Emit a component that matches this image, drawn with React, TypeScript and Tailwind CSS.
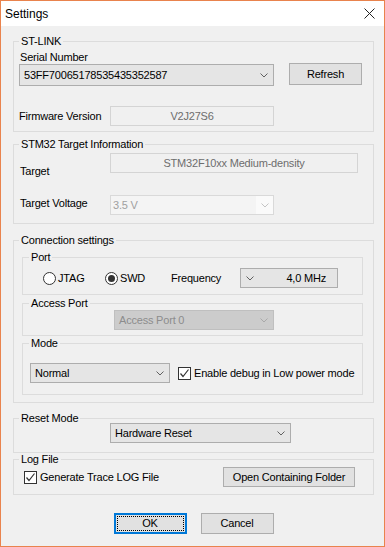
import React from "react";

const Chevron: React.FC<{ color?: string }> = ({ color = "#606060" }) => (
  <svg width="8" height="5" viewBox="0 0 8 5" fill="none">
    <polyline points="0.5,0.5 4,4 7.5,0.5" stroke={color} strokeWidth="1" />
  </svg>
);

const Group: React.FC<{
  title: string;
  inner?: boolean;
  className?: string;
  children: React.ReactNode;
}> = ({ title, inner, className = "", children }) => (
  <fieldset className={`border border-[#dcdcdc] ${className}`}>
    <legend className={`${inner ? "ml-[6px]" : "ml-[5px]"} px-[2px] leading-[13px]`}>
      {title}
    </legend>
    {children}
  </fieldset>
);

const Combo: React.FC<{ value: string; className?: string; disabled?: boolean }> = ({
  value,
  className = "",
  disabled,
}) => (
  <div
    className={`flex items-center justify-between border pl-[4px] pr-[5px] ${
      disabled
        ? "border-[#bfbfbf] bg-[#cccccc] text-[#8c8c8c]"
        : "border-[#adadad] bg-[#e5e5e5] text-black"
    } ${className}`}
  >
    <span>{value}</span>
    <Chevron color={disabled ? "#a9a9a9" : "#606060"} />
  </div>
);

const ReadOnly: React.FC<{ value: string; className?: string }> = ({ value, className = "" }) => (
  <div
    className={`flex h-[20px] items-center justify-center border border-[#d4d4d4] bg-[#f0f0f0] text-[#6d6d6d] ${className}`}
  >
    {value}
  </div>
);

const Button: React.FC<{ className?: string; children: React.ReactNode }> = ({
  className = "",
  children,
}) => (
  <button
    className={`flex items-center justify-center border border-[#adadad] bg-[#e1e1e1] ${className}`}
  >
    {children}
  </button>
);

const Radio: React.FC<{ checked?: boolean }> = ({ checked }) => (
  <span className="flex h-[13px] w-[13px] items-center justify-center rounded-full border border-[#333333] bg-white">
    {checked && <span className="h-[7px] w-[7px] rounded-full bg-[#333333]" />}
  </span>
);

const Checkbox: React.FC = () => (
  <span className="flex h-[13px] w-[13px] items-center justify-center border border-[#333333] bg-white">
    <svg width="11" height="11" viewBox="0 0 11 11" fill="none">
      <polyline points="1.5,5.5 4,8.5 9.5,1.5" stroke="#333333" strokeWidth="1.2" />
    </svg>
  </span>
);

export default function App() {
  return (
    <div className="flex h-[547px] w-[385px] flex-col border border-[#e9834d] bg-[#f0f0f0] font-['Liberation_Sans',Arial,sans-serif] text-[11px] tracking-[-0.2px] text-black">
      {/* title bar */}
      <div className="flex h-[25px] shrink-0 items-center justify-between bg-white pl-[4px] pr-[9px]">
        <span className="text-[12px] tracking-normal">Settings</span>
        <svg width="11" height="11" viewBox="0 0 11 11">
          <path d="M0.5 0.5 L10.5 10.5 M10.5 0.5 L0.5 10.5" stroke="#222" strokeWidth="1" />
        </svg>
      </div>

      <div className="flex flex-col pl-[12px] pt-[9px]">
        <Group title="ST-LINK" className="w-[361px]">
          <div className="px-[5px] pb-[5px] pt-[3px]">
            <div className="pl-[1px] leading-[13px]">Serial Number</div>
            <div className="flex items-start">
              <Combo value="53FF70065178535435352587" className="h-[22px] w-[255px]" />
              <Button className="ml-[15px] mt-[-1px] h-[22px] w-[73px]">Refresh</Button>
            </div>
            <div className="mt-[20px] flex items-center">
              <span className="w-[91px]">Firmware Version</span>
              <ReadOnly value="V2J27S6" className="w-[164px]" />
            </div>
          </div>
        </Group>

        <Group title="STM32 Target Information" className="mt-[6px] w-[361px]">
          <div className="px-[5px] pb-[8px] pt-[2px]">
            <div className="flex items-start">
              <span className="mt-[12px] w-[91px] pl-[1px] leading-[13px]">Target</span>
              <ReadOnly value="STM32F10xx Medium-density" className="w-[248px]" />
            </div>
            <div className="mt-[17px] flex items-start">
              <span className="mt-[2px] w-[91px] pl-[1px] leading-[13px]">Target Voltage</span>
              <div className="flex h-[20px] w-[164px] border border-[#d9d9d9] bg-[#f4f4f4] text-[#a0a0a0]">
                <span className="flex flex-1 items-center pl-[2px]">3.5 V</span>
                <span className="flex w-[17px] items-center justify-center bg-[#fafafa]">
                  <Chevron color="#c4c4c4" />
                </span>
              </div>
            </div>
          </div>
        </Group>

        <Group title="Connection settings" className="mt-[10px] w-[361px]">
          <div className="pb-[7px] pl-[8px] pt-[4px]">
            <Group title="Port" inner className="w-[341px]">
              <div className="flex h-[20px] items-center pb-0 pt-0 mt-[4px] mb-[6px]">
                <span className="ml-[20px] flex w-[62px] items-center gap-[2px]">
                  <Radio />
                  <span>JTAG</span>
                </span>
                <span className="flex w-[66px] items-center gap-[2px]">
                  <Radio checked />
                  <span>SWD</span>
                </span>
                <span className="w-[69px]">Frequency</span>
                <div className="flex h-[20px] w-[98px] items-center justify-between border border-[#adadad] bg-[#e5e5e5] pl-[5px] pr-[11px]">
                  <Chevron />
                  <span>4,0 MHz</span>
                </div>
              </div>
            </Group>

            <Group title="Access Port" inner className="mt-[2px] w-[341px]">
              <div className="pb-[5px]">
                <Combo value="Access Port 0" disabled className="ml-[91px] h-[20px] w-[160px]" />
              </div>
            </Group>

            <Group title="Mode" inner className="mt-[1px] w-[341px]">
              <div className="flex items-center pb-[11px] pt-[13px]">
                <Combo value="Normal" className="ml-[7px] h-[20px] w-[140px]" />
                <span className="ml-[8px]">
                  <Checkbox />
                </span>
                <span className="ml-[3px]">Enable debug in Low power mode</span>
              </div>
            </Group>
          </div>
        </Group>

        <Group title="Reset Mode" className="mt-[9px] w-[361px]">
          <div className="pb-[9px]">
            <Combo value="Hardware Reset" className="ml-[96px] mt-[-2px] h-[20px] w-[181px]" />
          </div>
        </Group>

        <Group title="Log File" className="w-[361px]">
          <div className="flex h-[20px] items-center mt-[1px] mb-[7px]">
            <span className="ml-[10px]">
              <Checkbox />
            </span>
            <span className="ml-[3px]">Generate Trace LOG File</span>
            <Button className="ml-auto mr-[18px] h-[20px] w-[132px]">Open Containing Folder</Button>
          </div>
        </Group>

        <div className="mt-[18px] flex w-[361px] justify-center gap-[14px]">
          <button className="h-[21px] w-[73px] border-2 border-[#0078d7] bg-[#e1e1e1] p-[1px]">
            <div className="flex h-full w-full items-center justify-center border border-dotted border-black">
              OK
            </div>
          </button>
          <Button className="h-[21px] w-[73px]">Cancel</Button>
        </div>
      </div>
    </div>
  );
}
